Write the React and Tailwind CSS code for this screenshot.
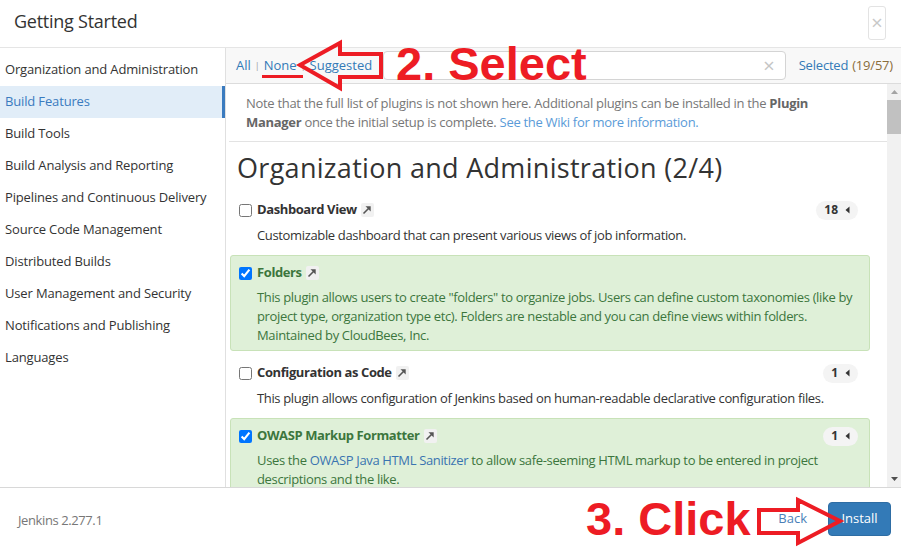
import React from "react";

const FONT = { fontFamily: '"Open Sans", "Noto Sans", sans-serif' };

function LinkIcon() {
  return (
    <span className="inline-flex items-center justify-center w-[13px] h-[14px] ml-[4px] bg-[#f1f1f1] rounded-[2px]">
      <svg width="10" height="10" viewBox="0 0 10 10">
        <path d="M1.5 8.5 L7.5 2.5" stroke="#555" strokeWidth="1.6" fill="none" />
        <path d="M3.5 1.3 H8.7 V6.5 Z" fill="#555" />
      </svg>
    </span>
  );
}

function Badge({ n }) {
  return (
    <span className="inline-flex items-center h-[19px] pl-[8px] pr-[8px] gap-[7px] rounded-full bg-[#f4f4f4] text-[12px] font-bold text-[#333]">
      {n}
      <svg width="5" height="8" viewBox="0 0 5 8">
        <path d="M4.5 0.5 V7.5 L0.5 4 Z" fill="#333" />
      </svg>
    </span>
  );
}

function Plugin({ name, checked, children, badge, mt = "mt-[4px]", pt = "pt-[6px]" }) {
  return (
    <div
      className={`border rounded-[3px] ${pt} pb-[5px] pl-[8px] pr-[11px] ${
        checked ? "bg-[#dff0d8] border-[#c8e2b8] text-[#3c763d]" : "border-transparent text-[#333]"
      }`}
    >
      <div className="flex items-center justify-between h-[22px]">
        <div className="flex items-center">
          <input
            type="checkbox"
            defaultChecked={checked}
            readOnly
            className="w-[13px] h-[13px] m-0 accent-[#0075ff]"
          />
          <span
            className={`ml-[5px] text-[13px] font-bold tracking-[-0.4px] ${
              checked ? "text-[#3c763d]" : "text-[#333]"
            }`}
          >
            {name}
          </span>
          <LinkIcon />
        </div>
        {badge && <Badge n={badge} />}
      </div>
      <div className={`${mt} pl-[18px] text-[13px] leading-[19px] tracking-[-0.35px] whitespace-nowrap`}>{children}</div>
    </div>
  );
}

const categories = [
  "Organization and Administration",
  "Build Features",
  "Build Tools",
  "Build Analysis and Reporting",
  "Pipelines and Continuous Delivery",
  "Source Code Management",
  "Distributed Builds",
  "User Management and Security",
  "Notifications and Publishing",
  "Languages",
];

export default function App() {
  return (
    <div className="relative w-[901px] h-[549px] overflow-hidden bg-white flex flex-col text-[#333]" style={FONT}>
      {/* Header */}
      <div className="h-[48px] shrink-0 border-b border-[#e5e5e5] flex items-start justify-between pl-[14px] pr-[15px]">
        <div className="mt-[8px] text-[18px] leading-[26px] tracking-[-0.25px] text-[#333]">Getting Started</div>
        <div className="mt-[6px] w-[18px] h-[34px] border border-[#e3e3e3] rounded-[3px] flex items-center justify-center text-[#c8c8c8] text-[20px] leading-none">
          ×
        </div>
      </div>

      {/* Body */}
      <div className="flex-1 flex min-h-0">
        {/* Sidebar */}
        <div className="w-[226px] shrink-0 border-r border-[#e0e0e0] pt-[6px]">
          {categories.map((c) => (
            <div
              key={c}
              className={`h-[32px] flex items-center pl-[5px] text-[13px] tracking-[-0.15px] ${
                c === "Build Features"
                  ? "bg-[#e1edf8] text-[#3a7bbf] border-r-[3px] border-[#3a7bbf]"
                  : "text-[#333]"
              }`}
            >
              {c}
            </div>
          ))}
        </div>

        {/* Main */}
        <div className="flex-1 flex flex-col min-w-0">
          {/* Toolbar */}
          <div className="h-[36px] shrink-0 border-b border-[#dcdcdc] bg-[#f8f8f8] flex items-center pl-[10px] pr-[8px] text-[13px]">
            <span className="text-[#337ab7]">All</span>
            <span className="mx-[4px] text-[#999] text-[9px]">|</span>
            <span className="text-[#337ab7]">None</span>
            <span className="mx-[4px] text-[#999] text-[9px]">|</span>
            <span className="text-[#337ab7]">Suggested</span>
            <div className="ml-[11px] flex-1 h-[29px] border border-[#d4d4d4] rounded-[4px] bg-white flex items-center justify-end pr-[10px]">
              <span className="text-[#c5c5c5] text-[20px] leading-none">×</span>
            </div>
            <span className="ml-[13px] text-[#337ab7] tracking-[-0.2px]">Selected</span>
            <span className="ml-[4px] text-[#8a6d3b] tracking-[-0.2px]">(19/57)</span>
          </div>

          {/* Content */}
          <div className="flex-1 flex min-h-0">
            <div className="flex-1 min-w-0 overflow-hidden">
              <div className="border-b border-[#e3e3e3] ml-[3px] pl-[17px] pr-[20px] pt-[10px] pb-[9px] text-[13px] leading-[19px] tracking-[-0.3px] text-[#777] whitespace-nowrap">
                Note that the full list of plugins is not shown here. Additional plugins can be installed in the{" "}
                <b className="text-[#666]">Plugin</b>
                <br />
                <b className="text-[#666]">Manager</b> once the initial setup is complete.{" "}
                <span className="text-[#5a9bd8]">See the Wiki for more information.</span>
              </div>
              <div className="pl-[4px] pr-[17px]">
                <h2 className="pl-[7px] pt-[8px] mb-[5px] text-[27px] leading-[36px] tracking-[0.3px] text-[#333] font-normal whitespace-nowrap">
                  Organization and Administration (2/4)
                </h2>
                <div className="flex flex-col gap-[4px]">
                  <Plugin name="Dashboard View" badge="18" mt="mt-[5px]" pt="pt-[7px]">
                    Customizable dashboard that can present various views of job information.
                  </Plugin>
                  <Plugin name="Folders" checked>
                    This plugin allows users to create "folders" to organize jobs. Users can define custom taxonomies (like by
                    <br />
                    project type, organization type etc). Folders are nestable and you can define views within folders.
                    <br />
                    Maintained by CloudBees, Inc.
                  </Plugin>
                  <Plugin name="Configuration as Code" badge="1" mt="mt-[5px]">
                    This plugin allows configuration of Jenkins based on human-readable declarative configuration files.
                  </Plugin>
                  <Plugin name="OWASP Markup Formatter" checked badge="1">
                    Uses the <span className="text-[#3a74b0]">OWASP Java HTML Sanitizer</span> to allow safe-seeming HTML markup to be entered in project
                    <br />
                    descriptions and the like.
                  </Plugin>
                </div>
              </div>
            </div>
            {/* Scrollbar */}
            <div className="w-[14px] shrink-0 bg-[#f1f1f1] flex flex-col items-center">
              <div className="h-[16px] flex items-center justify-center">
                <svg width="7" height="4" viewBox="0 0 7 4"><path d="M0 4 L3.5 0 L7 4 Z" fill="#a3a3a3" /></svg>
              </div>
              <div className="w-full h-[34px] bg-[#c1c1c1]" />
              <div className="flex-1" />
              <div className="h-[16px] flex items-center justify-center">
                <svg width="7" height="4" viewBox="0 0 7 4"><path d="M0 0 L7 0 L3.5 4 Z" fill="#505050" /></svg>
              </div>
            </div>
          </div>
        </div>
      </div>

      {/* Footer */}
      <div className="h-[62px] shrink-0 border-t border-[#d8d8d8] flex items-center justify-between pl-[18px] pr-[10px]">
        <span className="mt-[5px] text-[13px] tracking-[-0.4px] text-[#777]">Jenkins 2.277.1</span>
        <div className="flex items-center">
          <span className="mt-[1px] text-[13px] text-[#4a7fb8] mr-[21px]">Back</span>
          <div className="w-[63px] h-[34px] pt-[1px] rounded-[4px] bg-[#337ab7] border border-[#2e6da4] flex items-center justify-center text-white text-[13px]">
            Install
          </div>
        </div>
      </div>

      {/* Annotation overlays */}
      <svg className="absolute inset-0 pointer-events-none" width="901" height="549" viewBox="0 0 901 549">
        <polygon points="300,65 340,43 340,54 381,54 381,77 340,77 340,88" fill="none" stroke="#ed1c24" strokeWidth="4" strokeLinejoin="miter" />
        <rect x="262" y="75" width="41" height="3" fill="#ed1c24" />
        <polygon points="759,510 798,510 798,500 840,521 798,543 798,533 759,533" fill="none" stroke="#ed1c24" strokeWidth="4" />
      </svg>
      <div
        className="absolute left-[396px] top-[40px] text-[47px] leading-none font-bold text-[#ed1c24] pointer-events-none whitespace-nowrap"
        style={{ fontFamily: '"Liberation Sans", Arial, sans-serif' }}
      >
        2. Select
      </div>
      <div
        className="absolute left-[586px] top-[495px] text-[47px] leading-none font-bold text-[#ed1c24] pointer-events-none whitespace-nowrap"
        style={{ fontFamily: '"Liberation Sans", Arial, sans-serif' }}
      >
        3. Click
      </div>
    </div>
  );
}
